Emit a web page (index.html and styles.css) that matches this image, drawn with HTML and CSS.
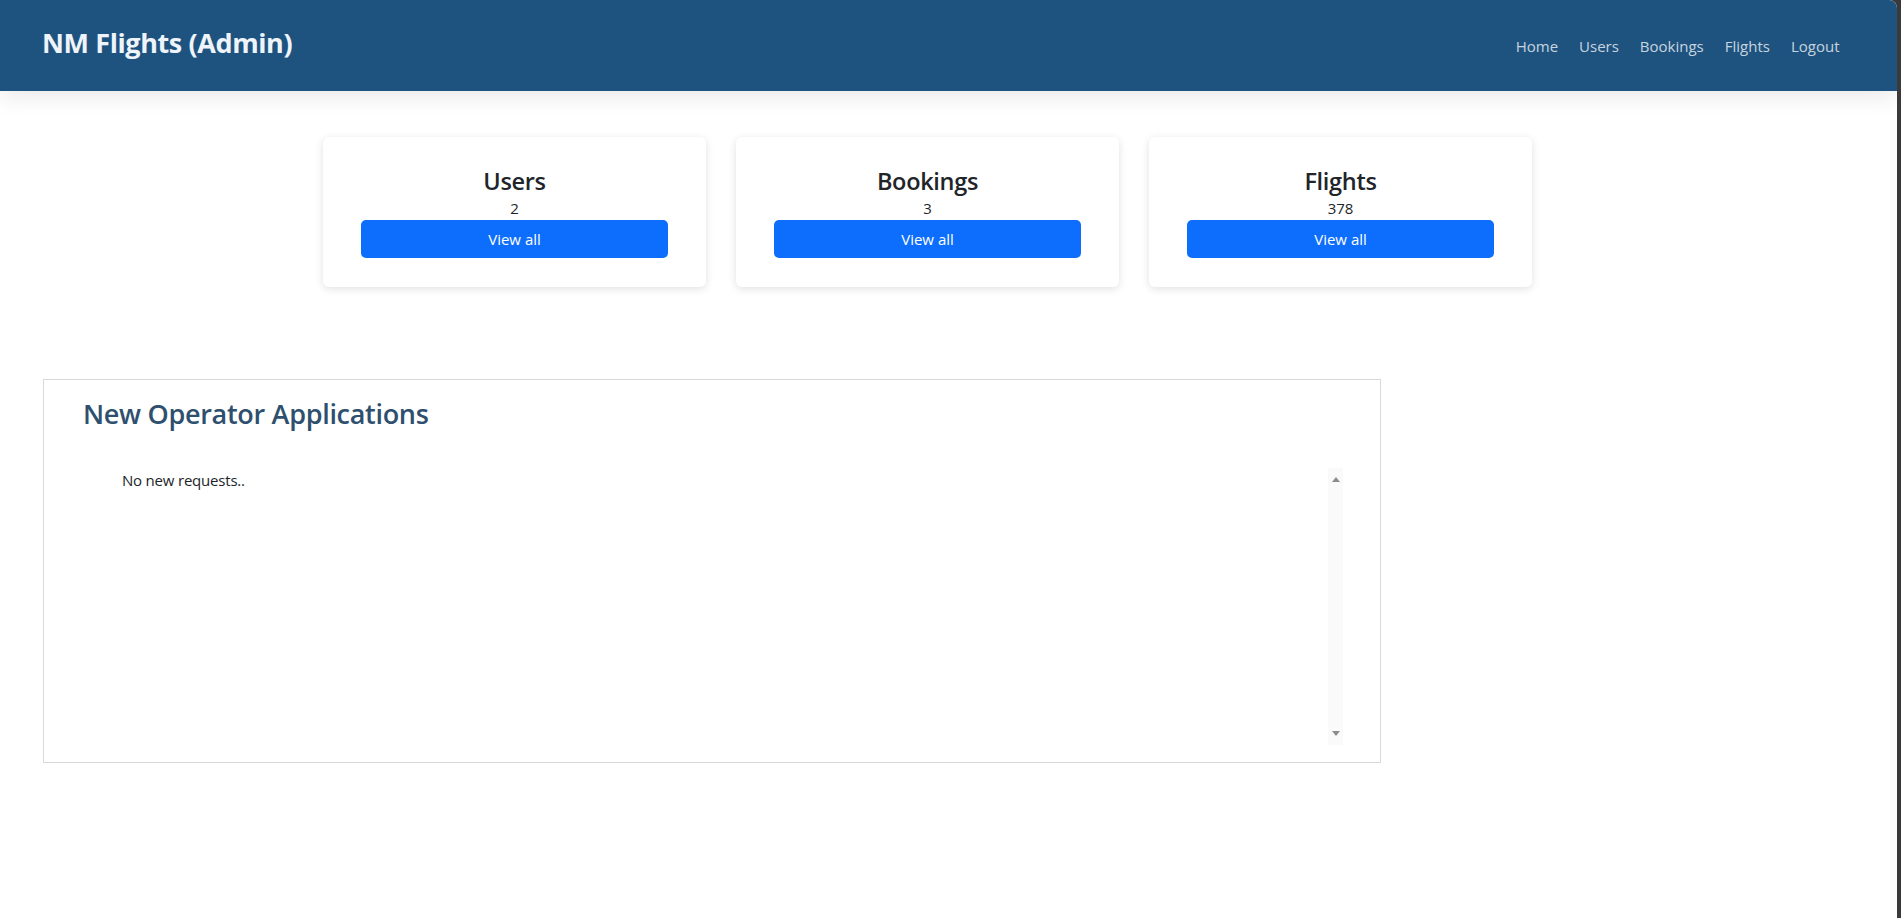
FILE: index.html
```html
<!DOCTYPE html>
<html lang="en">
<head>
<meta charset="utf-8">
<title>NM Flights (Admin)</title>
<link rel="stylesheet" href="styles.css">
</head>
<body>
<div class="app">
  <header class="topbar">
    <a class="brand" href="#">NM Flights (Admin)</a>
    <nav class="nav">
      <a href="#">Home</a>
      <a href="#">Users</a>
      <a href="#">Bookings</a>
      <a href="#">Flights</a>
      <a href="#">Logout</a>
    </nav>
  </header>

  <main class="main">
    <section class="stats">
      <div class="stat-card">
        <h3 class="stat-title">Users</h3>
        <div class="stat-count">2</div>
        <a class="btn-primary" href="#">View all</a>
      </div>
      <div class="stat-card">
        <h3 class="stat-title">Bookings</h3>
        <div class="stat-count">3</div>
        <a class="btn-primary" href="#">View all</a>
      </div>
      <div class="stat-card">
        <h3 class="stat-title">Flights</h3>
        <div class="stat-count">378</div>
        <a class="btn-primary" href="#">View all</a>
      </div>
    </section>

    <section class="panel">
      <h2 class="panel-title">New Operator Applications</h2>
      <div class="scroll-box">
        <div class="scroll-content">
          <p class="empty">No new requests..</p>
        </div>
        <div class="fake-scrollbar">
          <span class="arrow-up"></span>
          <span class="arrow-down"></span>
        </div>
      </div>
    </section>
  </main>
</div>
</body>
</html>
```

FILE: styles.css
```css
html {
  background: #3a3a3a;
}
body {
  margin: 0 4px 0 0;
  font-family: "Open Sans", "Noto Sans", sans-serif;
  color: #212529;
  background: #ffffff;
  border-top-right-radius: 8px;
  overflow: hidden;
  min-height: 918px;
}
a { text-decoration: none; }

.topbar {
  height: 91px;
  background: #1e5380;
  display: flex;
  align-items: center;
  justify-content: space-between;
  padding: 0 47px 0 42px;
  box-shadow: 0 6px 22px rgba(0, 0, 0, 0.09);
  position: relative;
}
.brand {
  color: #eef4fa;
  font-size: 27px;
  font-weight: 700;
  letter-spacing: -0.4px;
  padding-bottom: 7px;
}
.nav {
  display: flex;
}
.nav a {
  color: rgba(255, 255, 255, 0.76);
  font-size: 15px;
  padding: 0 10.5px;
}

.main {
  padding-top: 46px;
}
.stats {
  display: flex;
  gap: 30px;
  padding-left: 323px;
}
.stat-card {
  width: 383px;
  box-sizing: border-box;
  padding: 29px 38px;
  background: #fff;
  border-radius: 6px;
  box-shadow: 0 2px 9px rgba(0, 0, 0, 0.12);
  display: flex;
  flex-direction: column;
  align-items: center;
}
.stat-title {
  margin: 0;
  font-size: 23.5px;
  font-weight: 600;
  line-height: 30px;
  letter-spacing: -0.3px;
}
.stat-count {
  font-size: 15px;
  line-height: 24px;
}
.btn-primary {
  display: block;
  width: 100%;
  height: 38px;
  line-height: 38px;
  text-align: center;
  background: #0d6efd;
  color: #fff;
  font-size: 15px;
  border-radius: 5px;
}

.panel {
  margin: 92px 0 0 43px;
  width: 1338px;
  height: 384px;
  box-sizing: border-box;
  border: 1px solid #d9d9d9;
  padding: 14px 37px 17px 39px;
  display: flex;
  flex-direction: column;
}
.panel-title {
  margin: 0;
  font-size: 27px;
  font-weight: 600;
  line-height: 40px;
  color: #2e506e;
  letter-spacing: -0.3px;
}
.scroll-box {
  margin-top: 34px;
  flex: 1;
  display: flex;
}
.scroll-content {
  flex: 1;
  padding-left: 39px;
}
.empty {
  margin: 0;
  font-size: 15px;
  line-height: 24px;
  letter-spacing: -0.2px;
}
.fake-scrollbar {
  width: 15px;
  background: #fafafa;
  display: flex;
  flex-direction: column;
  justify-content: space-between;
  align-items: center;
  padding: 9px 0;
}
.arrow-up {
  width: 0;
  height: 0;
  border-left: 4px solid transparent;
  border-right: 4px solid transparent;
  border-bottom: 5px solid #8c8c8c;
}
.arrow-down {
  width: 0;
  height: 0;
  border-left: 4px solid transparent;
  border-right: 4px solid transparent;
  border-top: 5px solid #8c8c8c;
}
```
